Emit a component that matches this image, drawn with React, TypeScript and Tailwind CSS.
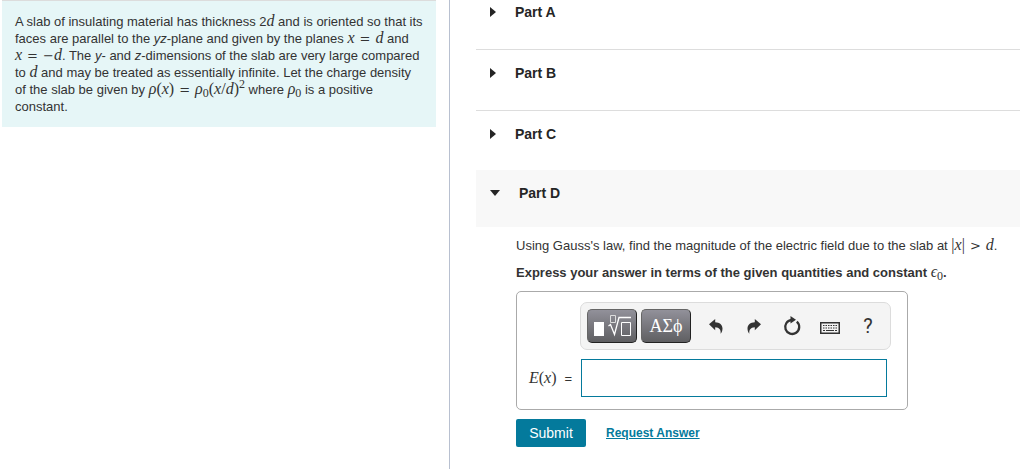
import React, { useState } from 'react';

// Inline math run, set in an italic serif next to the sans body text
const MathText: React.FC<{ children: React.ReactNode }> = ({ children }) => (
  <span className="whitespace-nowrap font-['Liberation_Serif',serif] text-[16px] font-normal leading-none italic">
    {children}
  </span>
);

const Sub: React.FC<{ children: React.ReactNode }> = ({ children }) => (
  <sub className="text-[12px] not-italic">{children}</sub>
);

const Upright: React.FC<{ children: React.ReactNode }> = ({ children }) => (
  <span className="not-italic">{children}</span>
);

// Relation sign with the wide spacing of typeset formulas
const Rel: React.FC<{ children: React.ReactNode }> = ({ children }) => (
  <span className="mx-[5px] font-['DejaVu_Sans',sans-serif] text-[13px] not-italic">{children}</span>
);

const ProblemStatement: React.FC = () => (
  <section className="border-t border-[#dcdcdc] bg-[#e6f6f7] py-3 pl-[13px] pr-3 text-[13px] leading-[17px] text-[#333]">
    <p>
      A slab of insulating material has thickness 2<MathText>d</MathText> and is oriented so that its faces are
      parallel to the <i>yz</i>-plane and given by the planes{' '}
      <MathText>
        x<Rel>=</Rel>d
      </MathText>{' '}
      and{' '}
      <MathText>
        x<Rel>=</Rel>
        <span className="font-['DejaVu_Sans',sans-serif] text-[13px] not-italic">−</span>d
      </MathText>
      . The <i>y</i>- and <i>z</i>-dimensions of the slab are very large compared to <MathText>d</MathText> and may be
      treated as essentially infinite. Let the charge density of the slab be given by{' '}
      <MathText>
        ρ<Upright>(</Upright>x<Upright>)</Upright>
        <Rel>=</Rel>ρ<Sub>0</Sub>
        <Upright>(</Upright>x<Upright>/</Upright>d<Upright>)</Upright>
        <sup className="text-[12px] not-italic">2</sup>
      </MathText>{' '}
      where <MathText>ρ<Sub>0</Sub></MathText> is a positive constant.
    </p>
  </section>
);

const PartHeading: React.FC<{ label: string; open?: boolean; onToggle: () => void; className?: string }> = ({
  label,
  open = false,
  onToggle,
  className = '',
}) => (
  <h2 className={className}>
    <button
      type="button"
      aria-expanded={open}
      onClick={onToggle}
      className="flex w-full items-center gap-[19px] px-[14px] text-left text-sm font-bold text-[#252525]"
    >
      {open ? (
        <svg width="10" height="6" viewBox="0 0 10 6" fill="currentColor" aria-hidden="true">
          <path d="M0 0h10L5 6z" />
        </svg>
      ) : (
        <svg width="6" height="10" viewBox="0 0 6 10" fill="currentColor" aria-hidden="true">
          <path d="M0 0l6 5-6 5z" />
        </svg>
      )}
      {label}
    </button>
  </h2>
);

const TemplateIcon = () => (
  <svg width="38" height="22" viewBox="0 0 38 22" fill="none" stroke="#fff" aria-hidden="true">
    <rect x="1" y="7" width="10" height="14" fill="#fff" stroke="none" />
    <path d="M17.5 0.5h5v7h-5z" stroke="#ddd" />
    <path d="M15.500 11l2-1.500 4 10L26 2.500h12" strokeWidth="1.300" />
    <path d="M28.500 7.500h9v13h-9z" />
  </svg>
);

const UndoIcon = () => (
  <svg width="14" height="15" viewBox="0 0 14 15" fill="currentColor" aria-hidden="true">
    <path d="M0 5.200L6.200 0v3.200c4.500.2 7.300 2.500 7.300 6.200 0 2.100-.7 3.900-1.900 5.300.5-3.800-1-6.300-5.400-6.500v3z" />
  </svg>
);

const RedoIcon = () => (
  <svg width="14" height="15" viewBox="0 0 14 15" fill="currentColor" aria-hidden="true">
    <path d="M14 5.200L7.800 0v3.200C3.300 3.400.5 5.700.5 9.400c0 2.100.7 3.900 1.900 5.300-.5-3.800 1-6.300 5.400-6.500v3z" />
  </svg>
);

const ResetIcon = () => (
  <svg width="18" height="20" viewBox="0 0 18 20" fill="none" aria-hidden="true">
    <path d="M13.800 5.700A7 7 0 1 1 8.500 4" stroke="currentColor" strokeWidth="2.300" />
    <path d="M7.500 0l5.500 3.800-5.500 3.700z" fill="currentColor" />
  </svg>
);

const KeyboardIcon = () => (
  <svg width="20" height="12" viewBox="0 0 20 12" fill="none" stroke="currentColor" aria-hidden="true">
    <rect x="0.750" y="0.750" width="18.500" height="10.500" strokeWidth="1.500" />
    <path d="M3 3.500h14" strokeWidth="1.200" strokeDasharray="1.500 1" />
    <path d="M3 6h14" strokeWidth="1.200" strokeDasharray="1.500 1" />
    <path d="M3 8.500h2M6 8.500h8M15 8.500h2" strokeWidth="1.200" />
  </svg>
);

const darkButton =
  'flex h-[34px] w-[50px] items-center justify-center rounded-[5px] border border-r-[#222] border-b-[#222] border-t-[#666] border-l-[#666] bg-linear-to-b from-[#92919a] to-[#5f5f62] text-white';
const toolButton = 'flex h-[34px] w-[38px] items-center justify-center text-[#333]';

const Toolbar: React.FC = () => (
  <div
    role="toolbar"
    aria-label="Equation tools"
    className="flex items-center rounded-[7px] border border-[#dcdcdc] bg-[#f4f4f4] py-1.5 pl-1.5 pr-[3px]"
  >
    <button type="button" aria-label="Templates" className={darkButton}>
      <TemplateIcon />
    </button>
    <button
      type="button"
      aria-label="Symbols"
      className={`ml-1 mr-1.5 font-['Liberation_Serif',serif] text-[18px] ${darkButton}`}
    >
      ΑΣϕ
    </button>
    <button type="button" aria-label="Undo" className={toolButton}>
      <UndoIcon />
    </button>
    <button type="button" aria-label="Redo" className={toolButton}>
      <RedoIcon />
    </button>
    <button type="button" aria-label="Reset" className={toolButton}>
      <ResetIcon />
    </button>
    <button type="button" aria-label="Keyboard shortcuts" className={`pt-1 ${toolButton}`}>
      <KeyboardIcon />
    </button>
    <button type="button" aria-label="Help" className={`font-['Roboto',sans-serif] text-[20px] ${toolButton}`}>
      ?
    </button>
  </div>
);

const AnswerForm: React.FC = () => {
  const [answer, setAnswer] = useState('');

  return (
    <form onSubmit={(e) => e.preventDefault()}>
      <div className="grid max-w-[392px] grid-cols-[51px_1fr] items-center gap-y-[9px] rounded-[5px] border border-[#aaa] pb-3 pl-3 pr-4 pt-[10px]">
        <div className="col-start-2">
          <Toolbar />
        </div>
        <label htmlFor="answer" className="flex items-center gap-2 whitespace-nowrap text-[13px]">
          <MathText>
            E<Upright>(</Upright>x<Upright>)</Upright>
          </MathText>
          =
        </label>
        <div className="pl-px pr-1">
          <input
            id="answer"
            type="text"
            value={answer}
            onChange={(e) => setAnswer(e.target.value)}
            className="block h-[38px] w-full border border-[#047a9c] bg-white px-2 outline-none"
          />
        </div>
      </div>
      <div className="mt-[9px] flex items-center gap-5">
        <button type="submit" className="h-7 w-[70px] rounded-[2px] bg-[#047a9c] text-sm text-white">
          Submit
        </button>
        <a href="#request-answer" className="text-xs font-bold text-[#047a9c] underline">
          Request Answer
        </a>
      </div>
    </form>
  );
};

export default function App() {
  const [openPart, setOpenPart] = useState('D');
  const toggle = (part: string) => setOpenPart(openPart === part ? '' : part);

  return (
    <div className="grid min-h-screen grid-cols-[45fr_57fr] bg-white font-['Liberation_Sans',sans-serif] text-[#333]">
      <aside className="border-r border-[#b8c0d0] pl-0.5 pr-[13px]">
        <ProblemStatement />
      </aside>
      <main className="pl-[26px]">
        <PartHeading label="Part A" onToggle={() => toggle('A')} className="border-b border-[#ddd] pb-[27px] pt-0.5" />
        <PartHeading label="Part B" onToggle={() => toggle('B')} className="border-b border-[#ddd] pb-[27px] pt-[13px]" />
        <PartHeading label="Part C" onToggle={() => toggle('C')} className="pb-[26px] pt-[13px]" />
        <PartHeading label="Part D" open={openPart === 'D'} onToggle={() => toggle('D')} className="bg-[#f8f8f8] pb-6 pt-[13px]" />
        {openPart === 'D' && (
          <div className="pl-10 pt-[10px] text-[13px] leading-[17px]">
            <p className="mb-[10px]">
              Using Gauss's law, find the magnitude of the electric field due to the slab at{' '}
              <MathText>
                <Upright>|</Upright>x<Upright>|</Upright>
                <Rel>&gt;</Rel>d
              </MathText>
              .
            </p>
            <p className="mb-[10px] font-bold">
              Express your answer in terms of the given quantities and constant <MathText>ϵ<Sub>0</Sub></MathText>.
            </p>
            <AnswerForm />
          </div>
        )}
      </main>
    </div>
  );
}
